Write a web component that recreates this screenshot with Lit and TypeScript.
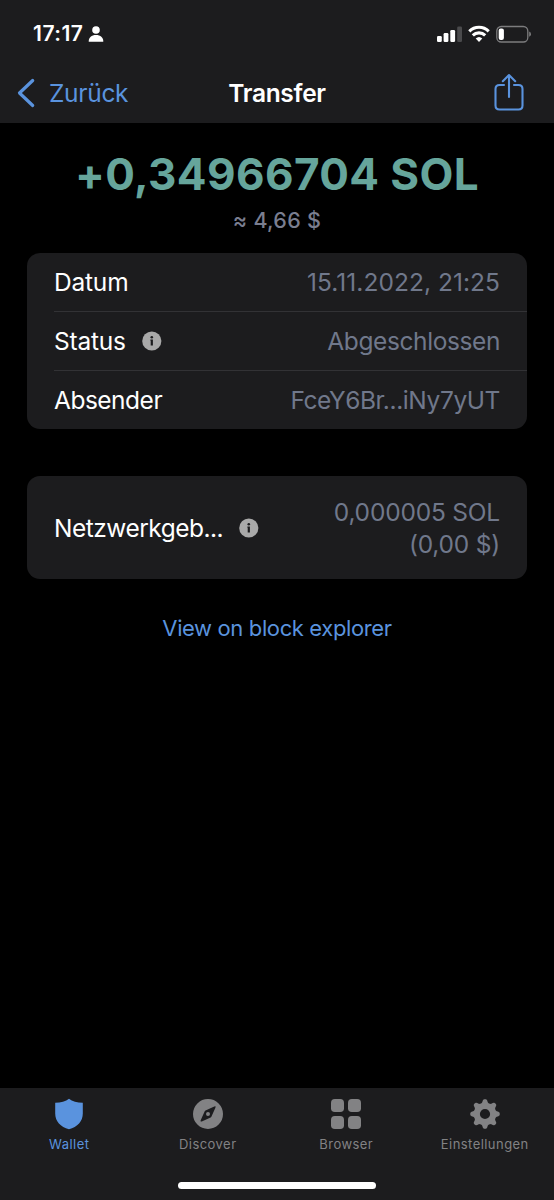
import { LitElement, html, svg, css } from "lit";
import { customElement, property } from "lit/decorators.js";

const gearPath = (): string => {
  const steps = 192;
  const points: string[] = [];
  for (let i = 0; i < steps; i++) {
    const a = (i / steps) * Math.PI * 2;
    const wave = 0.5 + 0.5 * Math.tanh(1.5 * Math.cos(8 * a) - 0.1) / Math.tanh(1.5);
    const r = 11.3 + 3.5 * wave;
    points.push(`${(16 + r * Math.sin(a)).toFixed(2)} ${(16 - r * Math.cos(a)).toFixed(2)}`);
  }
  return `M${points.join("L")}ZM16 10.9a5.1 5.1 0 1 0 0 10.2a5.1 5.1 0 1 0 0-10.2Z`;
};

const infoIcon = html`<svg class="info" width="20" height="20" viewBox="0 0 20 20">
  <circle cx="9.8" cy="10" r="9.6" fill="#a9a9a9" />
  <circle cx="9.8" cy="6.2" r="1.3" fill="#1c1c1e" />
  <path d="M8.400 8.5H10.900V14.500H8.700V9.700H8.400Z" fill="#1c1c1e" />
</svg>`;

const tabs = [
  {
    id: "wallet",
    label: "Wallet",
    icon: svg`<path d="M16 .7C19.2 3.3 24.2 4.6 29.8 4.7V15.5C29.8 23.5 24.5 28.8 16 31.3C7.5 28.8 2.2 23.5 2.2 15.5V4.7C7.8 4.6 12.8 3.3 16 .7Z" />`,
  },
  {
    id: "discover",
    label: "Discover",
    icon: svg`<path fill-rule="evenodd" d="M16 1a15 15 0 1 0 0 30a15 15 0 1 0 0-30ZM22.3 8.6Q24.2 7.8 23.4 9.7L19.6 18.3Q19.3 19 18.6 19.4L9.8 23.4Q8 24 8.7 22.3L12.5 13.7Q12.8 13 13.5 12.6ZM16 14a2 2 0 1 0 0 4a2 2 0 1 0 0-4Z" />`,
  },
  {
    id: "browser",
    label: "Browser",
    icon: svg`<rect x="1" y="1" width="13" height="13" rx="3.8" /><rect x="18" y="1" width="13" height="13" rx="3.8" /><rect x="1" y="18" width="13" height="13" rx="3.8" /><rect x="18" y="18" width="13" height="13" rx="3.8" />`,
  },
  {
    id: "settings",
    label: "Einstellungen",
    icon: svg`<path fill-rule="evenodd" d=${gearPath()} />`,
  },
];

@customElement("status-bar")
class StatusBar extends LitElement {
  static styles = css`
    :host { display: flex; align-items: center; height: 63px; padding: 4px 23px 0 33px; box-sizing: border-box; color: #fff; }
    .time { font-size: 21px; font-weight: 600; letter-spacing: 0.5px; line-height: 24px; }
    .person { margin-left: 5px; }
    .system { margin-left: auto; }
    svg { display: block; }
  `;
  render() {
    return html`
      <span class="time">17:17</span>
      <svg class="person" width="16" height="16" viewBox="0 0 16 16" fill="#fff">
        <circle cx="8" cy="4" r="3.8" />
        <path d="M.7 15.4C.7 11.5 3.5 9 8 9s7.3 2.5 7.3 6.4Q15.3 15.8 14.7 15.8H1.3Q.7 15.8.7 15.4Z" />
      </svg>
      <svg class="system" width="95" height="18" viewBox="0 0 95 18">
        <rect x="1" y="11" width="4.8" height="6" rx="1.3" fill="#fff" />
        <rect x="7.6" y="8" width="4.8" height="9" rx="1.3" fill="#fff" />
        <rect x="14.3" y="5" width="4.8" height="12" rx="1.3" fill="#fff" />
        <rect x="21.2" y="1.5" width="4.8" height="15.5" rx="1.3" fill="#4a4a4c" />
        <g fill="none" stroke="#fff" stroke-width="3.1">
          <path d="M33.3 6.3a13.8 13.8 0 0 1 19.4 0" />
          <path d="M36.8 10.4a8.8 8.8 0 0 1 12.4 0" />
        </g>
        <path d="M39.7 13.5a4.9 4.9 0 0 1 6.6 0L43 17Z" fill="#fff" />
        <rect x="60.8" y="1.5" width="31" height="15.5" rx="4.5" fill="none" stroke="#7c7c7e" stroke-width="1.3" />
        <rect x="62.7" y="3.4" width="5.2" height="11.7" rx="2" fill="#fff" />
        <path d="M93.2 6.6Q95 7.4 95 9.2T93.2 11.8Z" fill="#7c7c7e" />
      </svg>
    `;
  }
}

@customElement("nav-header")
class NavHeader extends LitElement {
  static styles = css`
    :host { display: grid; grid-template-columns: 1fr auto 1fr; align-items: center; height: 60px; padding: 0 30px 0 16px; box-sizing: border-box; }
    .back { display: flex; align-items: center; gap: 13px; color: #5a93de; font-size: 24.5px; line-height: 30px; letter-spacing: -0.3px; }
    .title { color: #fff; font-size: 24.5px; font-weight: 600; line-height: 30px; letter-spacing: -0.3px; margin-right: -14px; }
    .share { justify-self: end; margin-top: -2px; }
    svg { display: block; }
  `;
  render() {
    return html`
      <div class="back">
        <svg width="20" height="30" viewBox="0 0 20 30" fill="none" stroke="#5a93de" stroke-width="3.2" stroke-linecap="round" stroke-linejoin="round">
          <path d="M16.7 2.5L3.5 15L16.7 27.5" />
        </svg>
        <span>Zurück</span>
      </div>
      <div class="title">Transfer</div>
      <svg class="share" width="30" height="38" viewBox="0 0 30 38" fill="none" stroke="#5a93de" stroke-width="2.1" stroke-linecap="round" stroke-linejoin="round">
        <path d="M10 12H5.5Q1.5 12 1.5 16V32.5Q1.5 36.5 5.5 36.5H24.5Q28.5 36.5 28.5 32.5V16Q28.5 12 24.5 12H20" />
        <path d="M15 24V2.2M8.8 8.2L15 2L21.2 8.2" />
      </svg>
    `;
  }
}

@customElement("tab-bar")
class TabBar extends LitElement {
  @property() active = "wallet";
  static styles = css`
    :host { display: flex; flex-direction: column; height: 112px; box-sizing: border-box; background: #1c1c1e; }
    .tabs { display: grid; grid-template-columns: repeat(4, 1fr); padding-top: 10px; }
    .tab { display: flex; flex-direction: column; align-items: center; gap: 6px; color: #828284; font-size: 13px; line-height: 16px; font-weight: 400; letter-spacing: 0.45px; }
    .tab svg { display: block; fill: currentColor; }
    .active { color: #5a93de; }
    .indicator { width: 198px; height: 7px; border-radius: 4px; background: #fff; margin: auto auto 11px; }
  `;
  render() {
    return html`
      <div class="tabs">
        ${tabs.map(
          (t) => html`<div class="tab ${t.id === this.active ? "active" : ""}">
            <svg width="32" height="32" viewBox="0 0 32 32">${t.icon}</svg>
            <span>${t.label}</span>
          </div>`
        )}
      </div>
      <div class="indicator"></div>
    `;
  }
}

@customElement("app-root")
class AppRoot extends LitElement {
  static styles = css`
    :host { display: flex; flex-direction: column; height: 1200px; background: #000; font-family: Inter, "Noto Sans", sans-serif; overflow: hidden; white-space: nowrap; }
    .top { background: #1c1c1e; height: 123px; }
    .content { flex: 1; display: flex; flex-direction: column; padding: 0 27px; }
    .amount { margin-top: 24px; text-align: center; color: #66a59b; font-size: 44px; line-height: 54px; font-weight: 650; letter-spacing: 0.4px; }
    .fiat { margin-top: 6px; text-align: center; color: #7a7e90; font-size: 21.5px; line-height: 26px; font-weight: 500; letter-spacing: 0.3px; }
    .card { background: #1c1c1e; border-radius: 13px; color: #fff; font-size: 24.5px; line-height: 32px; letter-spacing: -0.2px; }
    .details { margin-top: 20px; height: 176px; padding-left: 27px; display: grid; grid-template-rows: 58px 59px 59px; }
    .row { display: flex; align-items: center; justify-content: space-between; padding-right: 27px; }
    .row + .row { border-top: 1px solid #323235; }
    .label { display: flex; align-items: center; gap: 16px; }
    .tight { letter-spacing: -0.5px; }
    .info { display: block; }
    .value { color: #70788b; text-align: right; }
    .date { letter-spacing: 0.05px; }
    .state, .sender { letter-spacing: -0.4px; }
    .fee { margin-top: 47px; height: 103px; padding-left: 27px; }
    .link { margin-top: 35px; text-align: center; color: #5a93de; font-size: 22px; line-height: 28px; letter-spacing: -0.38px; }
  `;
  render() {
    return html`
      <div class="top">
        <status-bar></status-bar>
        <nav-header></nav-header>
      </div>
      <div class="content">
        <div class="amount"><span>+0,34966704 SOL</span></div>
        <div class="fiat"><span>≈ 4,66 $</span></div>
        <div class="card details">
          <div class="row"><span class="label"><span>Datum</span></span><span class="value date">15.11.2022, 21:25</span></div>
          <div class="row"><span class="label"><span>Status</span>${infoIcon}</span><span class="value state">Abgeschlossen</span></div>
          <div class="row"><span class="label"><span class="tight">Absender</span></span><span class="value sender">FceY6Br...iNy7yUT</span></div>
        </div>
        <div class="card fee row">
          <span class="label"><span class="tight">Netzwerkgeb...</span>${infoIcon}</span>
          <span class="value">0,000005 SOL<br />(0,00 $)</span>
        </div>
        <div class="link"><span>View on block explorer</span></div>
      </div>
      <tab-bar active="wallet"></tab-bar>
    `;
  }
}
